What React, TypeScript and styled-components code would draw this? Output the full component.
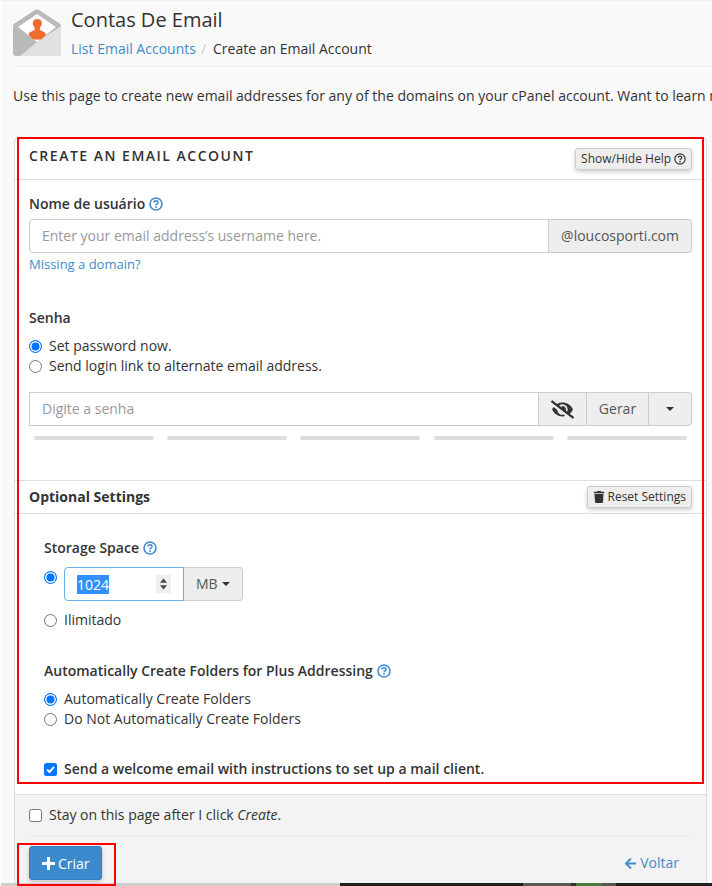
import React from "react";
import styled, { createGlobalStyle } from "styled-components";
import { FaEyeSlash, FaTrash, FaArrowLeft } from "react-icons/fa";

const Global = createGlobalStyle`
  html, body { margin: 0; padding: 0; background: #f9f9f9; }
  * { box-sizing: border-box; }
  body { font-family: "Open Sans", sans-serif; font-size: 14px; color: #333; line-height: 20px; }
`;

const Page = styled.div`
  position: relative;
  width: 712px;
  height: 886px;
  overflow: hidden;
  background: #f9f9f9;
  border-top: 1px solid #f1f1f1;
  border-left: 1px solid #ffffff;
`;

const Header = styled.header`
  display: flex;
  gap: 10px;
  height: 66px;
  margin: 0 0 0 12px;
  padding-top: 7px;
  border-bottom: 1px solid #eeeeee;
`;

const LogoSvg = styled.svg`
  flex: none;
  width: 48px;
  height: 48px;
  margin-top: 1px;
`;

const TitleBlock = styled.div`
  display: flex;
  flex-direction: column;
`;

const Title = styled.h1`
  margin: 0;
  font-size: 20px;
  line-height: 24px;
  font-weight: 400;
  color: #333;
`;

const Crumbs = styled.div`
  display: flex;
  margin-top: 7px;
  font-size: 14px;
  line-height: 20px;
  color: #333;
`;

const Link = styled.a`
  color: #428bca;
  text-decoration: none;
`;

const Sep = styled.span`
  color: #ccc;
  padding: 0 7px 0 5px;
`;

const Intro = styled.p`
  margin: 19px 0 0 12px;
  line-height: 20px;
  white-space: nowrap;
  color: #333;
`;

const Card = styled.section`
  margin: 32px 0 0 13px;
  width: 693px;
  background: #fff;
  border: 1px solid #ddd;
  border-bottom: 0;
  border-radius: 4px 4px 0 0;
`;

const CardHead = styled.div`
  display: flex;
  align-items: flex-start;
  justify-content: space-between;
  height: 41px;
  padding: 7px 14px 0 14px;
  border-bottom: 1px solid #ddd;
`;

const CardTitle = styled.h2`
  margin: 0;
  font-size: 14px;
  line-height: 20px;
  font-weight: 600;
  letter-spacing: 1.5px;
  text-transform: uppercase;
  color: #333;
`;

const SmallBtn = styled.button`
  display: inline-flex;
  align-items: center;
  gap: 3px;
  height: 22px;
  padding: 0 5px;
  font-family: inherit;
  font-size: 12px;
  line-height: 18px;
  color: #333;
  background: #eeeeee;
  border: 1px solid #ccc;
  border-radius: 3px;
  box-shadow: 0 2px 4px rgba(0, 0, 0, 0.2);
`;

const HelpBtn = styled(SmallBtn)`
  margin-top: 2px;
`;

const CardBody = styled.div`
  padding: 14px 14px 0 14px;
`;

const Label = styled.div`
  display: flex;
  align-items: center;
  gap: 4px;
  font-weight: 600;
  line-height: 20px;
  color: #333;
`;

const HelpIcon = styled.svg<{ $small?: boolean }>`
  width: ${(p) => (p.$small ? 12 : 14)}px;
  height: ${(p) => (p.$small ? 12 : 14)}px;
  flex: none;
`;

const InputGroup = styled.div`
  display: flex;
  height: 34px;
  margin-top: 5px;
`;

const TextInput = styled.div<{ $square?: boolean }>`
  flex: 1;
  display: flex;
  align-items: center;
  padding: 0 12px;
  color: #999;
  background: #fff;
  border: 1px solid #ccc;
  border-radius: ${(p) => (p.$square ? "0" : "4px 0 0 4px")};
`;

const Addon = styled.div<{ $w?: number; $last?: boolean }>`
  display: flex;
  align-items: center;
  justify-content: center;
  ${(p) => (p.$w ? `width: ${p.$w}px;` : "padding: 0 12px;")}
  color: #555;
  background: #eee;
  border: 1px solid #ccc;
  border-left: 0;
  border-radius: ${(p) => (p.$last ? "0 4px 4px 0" : "0")};
`;

const MissingLink = styled(Link)`
  display: block;
  margin-top: 1px;
  font-size: 13px;
  line-height: 20px;
`;

const SenhaLabel = styled(Label)`
  margin-top: 34px;
`;

const RadioList = styled.div`
  margin-top: 8px;
  display: flex;
  flex-direction: column;
`;

const OptionRow = styled.div`
  display: flex;
  align-items: center;
  gap: 7px;
  height: 20px;
  white-space: nowrap;
`;

const RadioMark = styled.span<{ $on?: boolean; $block?: boolean }>`
  flex: none;
  display: ${(p) => (p.$block ? "block" : "inline-block")};
  width: 13px;
  height: 13px;
  border-radius: 50%;
  background: ${(p) => (p.$on ? "#0075ff" : "#fff")};
  border: ${(p) => (p.$on ? "1.5px solid #0075ff" : "1px solid #767676")};
  box-shadow: ${(p) => (p.$on ? "inset 0 0 0 1.5px #fff" : "none")};
`;

const CheckMark = styled.span<{ $on?: boolean }>`
  flex: none;
  display: flex;
  align-items: center;
  justify-content: center;
  width: 13px;
  height: 13px;
  border-radius: 2.5px;
  background: ${(p) => (p.$on ? "#0075ff" : "#fff")};
  border: ${(p) => (p.$on ? "0" : "1px solid #767676")};
`;

const PasswordGroup = styled(InputGroup)`
  margin-top: 16px;
`;

const Strength = styled.div`
  display: grid;
  grid-template-columns: repeat(5, 120px);
  column-gap: 13.2px;
  margin: 10px 0 0 5px;
`;

const StrengthBar = styled.div`
  height: 4px;
  border-radius: 2px;
  background: #dddddd;
`;

const OptionalHead = styled.div`
  display: flex;
  align-items: center;
  justify-content: space-between;
  height: 34px;
  margin-top: 40px;
  padding: 0 14px;
  border-top: 1px solid #ddd;
  border-bottom: 1px solid #ddd;
`;

const OptionalTitle = styled.div`
  font-weight: 700;
  color: #333;
`;

const OptionalBody = styled.div`
  padding: 24px 14px 0 29px;
`;

const StorageRow = styled.div`
  display: flex;
  align-items: flex-start;
  gap: 7px;
  margin-top: 9px;
`;

const RadioTop = styled.div`
  padding-top: 4px;
`;

const NumberGroup = styled.div`
  display: flex;
`;

const NumberBox = styled.div`
  display: flex;
  align-items: center;
  justify-content: space-between;
  width: 120px;
  height: 34px;
  padding: 0 12px 0 12px;
  background: #fff;
  border: 1px solid #66afe9;
  border-radius: 4px 0 0 4px;
`;

const Selected = styled.span`
  background: #3390ff;
  color: #fff;
  line-height: 19px;
`;

const Spinner = styled.span`
  display: flex;
  align-items: center;
  justify-content: center;
  width: 15px;
  height: 18px;
  background: #efefef;
`;

const Unit = styled.div`
  display: flex;
  align-items: center;
  gap: 4px;
  height: 34px;
  padding: 0 12px;
  color: #555;
  background: #eee;
  border: 1px solid #ccc;
  border-left: 0;
  border-radius: 0 4px 4px 0;
`;

const Caret = styled.span`
  width: 0;
  height: 0;
  border-left: 4.5px solid transparent;
  border-right: 4.5px solid transparent;
  border-top: 4.5px solid #333;
`;

const IlimitadoRow = styled(OptionRow)`
  margin-top: 9px;
`;

const PlusLabel = styled(Label)`
  margin-top: 31px;
`;

const WelcomeRow = styled(OptionRow)`
  margin-top: 30px;
  font-weight: 600;
`;

const Footer = styled.div`
  height: 90px;
  margin-top: 15px;
  padding: 0 14px;
  background: #f3f3f3;
  border-top: 1px solid #ddd;
`;

const StayRow = styled(OptionRow)`
  height: 42px;
  gap: 7px;
  border-bottom: 1px solid #eaeaea;
  padding-bottom: 1px;
`;

const FooterActions = styled.div`
  display: flex;
  align-items: center;
  justify-content: space-between;
  padding: 9px 13px 0 0;
`;

const PrimaryBtn = styled.button`
  display: inline-flex;
  align-items: center;
  gap: 3px;
  height: 34px;
  padding: 0 11px 0 12px;
  font-family: inherit;
  font-size: 14px;
  color: #fff;
  background: #3b8ace;
  border: 1px solid #357ebd;
  border-radius: 3px;
  box-shadow: 0 2px 4px rgba(0, 0, 0, 0.2);
`;

const BackLink = styled(Link)`
  display: inline-flex;
  align-items: center;
  gap: 3px;
`;

const RedBox = styled.div<{ $x: number; $y: number; $w: number; $h: number }>`
  position: absolute;
  left: ${(p) => p.$x}px;
  top: ${(p) => p.$y}px;
  width: ${(p) => p.$w}px;
  height: ${(p) => p.$h}px;
  border: 2px solid #f00;
  pointer-events: none;
`;

const BottomStrip = styled.div`
  position: absolute;
  left: 0;
  right: 0;
  bottom: 0;
  height: 3px;
  display: flex;
`;

const StripPart = styled.div<{ $w?: number; $c: string }>`
  ${(p) => (p.$w ? `width: ${p.$w}px;` : "flex: 1;")}
  background: ${(p) => p.$c};
`;

const Help = () => (
  <HelpIcon viewBox="0 0 14 14">
    <circle cx="7" cy="7" r="6" fill="none" stroke="#428bca" strokeWidth="1.6" />
    <path d="M4.9 5.6c0-1.2.9-1.9 2.1-1.9s2.1.7 2.1 1.7c0 1.5-2.1 1.4-2.1 3" fill="none" stroke="#428bca" strokeWidth="1.5" />
    <rect x="6.2" y="9.4" width="1.6" height="1.6" fill="#428bca" />
  </HelpIcon>
);

const DarkHelp = () => (
  <HelpIcon $small viewBox="0 0 14 14">
    <circle cx="7" cy="7" r="6" fill="none" stroke="#333" strokeWidth="1.4" />
    <path d="M5 5.6c0-1.2.9-1.9 2-1.9s2 .7 2 1.7c0 1.5-2 1.4-2 3" fill="none" stroke="#333" strokeWidth="1.4" />
    <rect x="6.2" y="9.4" width="1.6" height="1.6" fill="#333" />
  </HelpIcon>
);

const Logo = () => (
  <LogoSvg viewBox="0 0 48 48">
    <path d="M0 17 Q0 15.5 1.5 14.5 L22 1 Q24 0 26 1 L46.5 14.5 Q48 15.5 48 17 L48 44 Q48 47 45 47 L3 47 Q0 47 0 44Z" fill="#b9b9b9" />
    <path d="M5 18 L24 5 L43 18 L24 33Z" fill="#ffffff" />
    <path d="M48 17 L48 44 Q48 47 45 47 L7 47 L24 33Z" fill="#e1e1e1" />
    <circle cx="24.3" cy="14.5" r="4.6" fill="#f26a2e" />
    <path d="M21.5 18 L27 18 L27 21 L32 23.5 L33 26 L28 30.5 L20.5 30.5 L15.5 26 L16.5 23.5 L21.5 21Z" fill="#f26a2e" />
  </LogoSvg>
);

const Check = () => (
  <svg width="11" height="11" viewBox="0 0 11 11">
    <path d="M2 5.6 L4.5 8 L9 2.8" fill="none" stroke="#fff" strokeWidth="2" />
  </svg>
);

const Updown = () => (
  <svg width="9" height="14" viewBox="0 0 9 14">
    <path d="M4.5 1.5 L8 5.8 H1Z M4.5 12.5 L8 8.2 H1Z" fill="#444" />
  </svg>
);

const Plus = () => (
  <svg width="13" height="13" viewBox="0 0 13 13">
    <path d="M5 0h3v5h5v3H8v5H5V8H0V5h5Z" fill="#fff" />
  </svg>
);

export default function App() {
  return (
    <>
      <Global />
      <Page>
        <Header>
          <Logo />
          <TitleBlock>
            <Title>Contas De Email</Title>
            <Crumbs>
              <Link href="#">List Email Accounts</Link>
              <Sep>/</Sep>
              <span>Create an Email Account</span>
            </Crumbs>
          </TitleBlock>
        </Header>
        <Intro>
          Use this page to create new email addresses for any of the domains on your cPanel account. Want to learn more? Read our documentation.
        </Intro>
        <Card>
          <CardHead>
            <CardTitle>Create an Email Account</CardTitle>
            <HelpBtn>
              Show/Hide Help <DarkHelp />
            </HelpBtn>
          </CardHead>
          <CardBody>
            <Label>
              Nome de usuário <Help />
            </Label>
            <InputGroup>
              <TextInput>Enter your email address’s username here.</TextInput>
              <Addon $last>@loucosporti.com</Addon>
            </InputGroup>
            <MissingLink href="#">Missing a domain?</MissingLink>
            <SenhaLabel>Senha</SenhaLabel>
            <RadioList>
              <OptionRow>
                <RadioMark $on />
                Set password now.
              </OptionRow>
              <OptionRow>
                <RadioMark />
                Send login link to alternate email address.
              </OptionRow>
            </RadioList>
            <PasswordGroup>
              <TextInput $square>Digite a senha</TextInput>
              <Addon $w={48}>
                <FaEyeSlash size={23} color="#333" />
              </Addon>
              <Addon $w={62}>Gerar</Addon>
              <Addon $w={43} $last>
                <Caret />
              </Addon>
            </PasswordGroup>
            <Strength>
              <StrengthBar />
              <StrengthBar />
              <StrengthBar />
              <StrengthBar />
              <StrengthBar />
            </Strength>
          </CardBody>
          <OptionalHead>
            <OptionalTitle>Optional Settings</OptionalTitle>
            <SmallBtn>
              <FaTrash size={12} color="#333" /> Reset Settings
            </SmallBtn>
          </OptionalHead>
          <OptionalBody>
            <Label>
              Storage Space <Help />
            </Label>
            <StorageRow>
              <RadioTop>
                <RadioMark $on $block />
              </RadioTop>
              <NumberGroup>
                <NumberBox>
                  <Selected>1024</Selected>
                  <Spinner>
                    <Updown />
                  </Spinner>
                </NumberBox>
                <Unit>
                  MB <Caret />
                </Unit>
              </NumberGroup>
            </StorageRow>
            <IlimitadoRow>
              <RadioMark />
              Ilimitado
            </IlimitadoRow>
            <PlusLabel>
              Automatically Create Folders for Plus Addressing <Help />
            </PlusLabel>
            <RadioList>
              <OptionRow>
                <RadioMark $on />
                Automatically Create Folders
              </OptionRow>
              <OptionRow>
                <RadioMark />
                Do Not Automatically Create Folders
              </OptionRow>
            </RadioList>
            <WelcomeRow>
              <CheckMark $on>
                <Check />
              </CheckMark>
              Send a welcome email with instructions to set up a mail client.
            </WelcomeRow>
          </OptionalBody>
          <Footer>
            <StayRow>
              <CheckMark />
              <span>
                Stay on this page after I click <em>Create</em>.
              </span>
            </StayRow>
            <FooterActions>
              <PrimaryBtn>
                <Plus /> Criar
              </PrimaryBtn>
              <BackLink href="#">
                <FaArrowLeft size={13} color="#428bca" /> Voltar
              </BackLink>
            </FooterActions>
          </Footer>
        </Card>
        <BottomStrip>
          <StripPart $w={339} $c="#cfcfcf" />
          <StripPart $c="#1f1f1f" />
          <StripPart $w={48} $c="#5a5a5a" />
          <StripPart $w={5} $c="#333" />
          <StripPart $w={26} $c="#4a7a40" />
          <StripPart $w={14} $c="#555" />
          <StripPart $w={96} $c="#1f1f1f" />
        </BottomStrip>
        <RedBox $x={16} $y={136} $w={687} $h={647} />
        <RedBox $x={16} $y={842} $w={99} $h={43} />
      </Page>
    </>
  );
}
